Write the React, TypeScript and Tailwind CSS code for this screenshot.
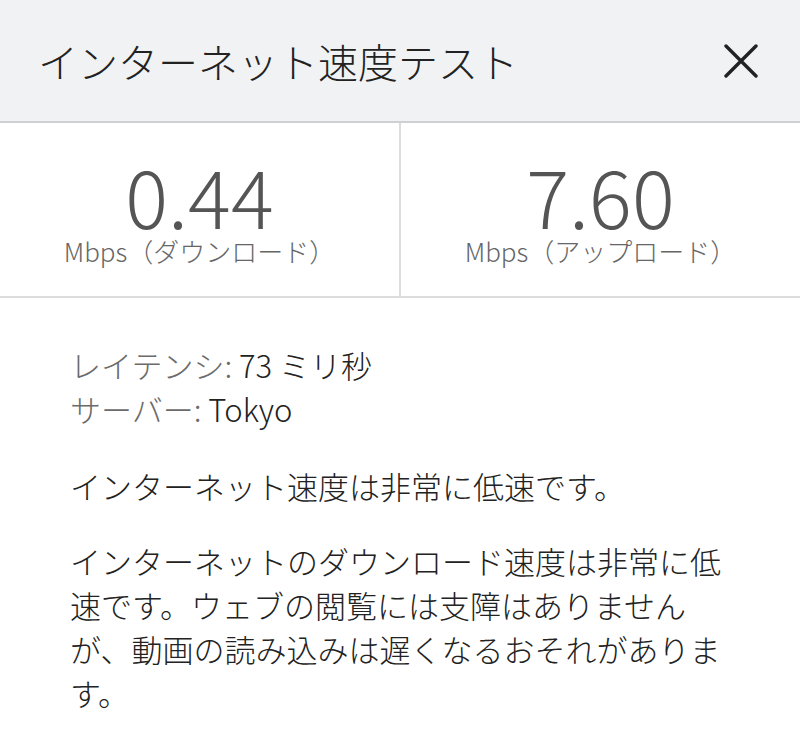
const font = { fontFamily: '"Noto Sans CJK JP", "Noto Sans", sans-serif' };

function CloseIcon() {
  return (
    <svg width="34" height="34" viewBox="0 0 34 34" fill="none" stroke="#222222" strokeWidth="3.4" strokeLinecap="round">
      <path d="M2 2L32 32M32 2L2 32" />
    </svg>
  );
}

function Stat({ value, label }: { value: string; label: string }) {
  return (
    <div className="flex flex-1 flex-col items-center justify-center">
      <div className="text-[80px] font-light leading-[80px] text-[#555555]">{value}</div>
      <div className="mt-[2px] text-[26px] font-light leading-[30px] text-[#666666]">{label}</div>
    </div>
  );
}

export default function App() {
  return (
    <div className="h-[743px] w-[800px] bg-white" style={font}>
      {/* ヘッダー */}
      <div className="flex h-[123px] items-center justify-between border-b-2 border-[#cfd0d2] bg-[#f1f2f4] pl-[38px] pr-[42px]">
        <h1 className="text-[40px] font-light leading-none text-[#222222]">インターネット速度テスト</h1>
        <CloseIcon />
      </div>

      {/* 速度 */}
      <div className="flex h-[175px] border-b-2 border-[#dcdcdc]">
        <Stat value="0.44" label="Mbps（ダウンロード）" />
        <div className="w-[2px] bg-[#dcdcdc]" />
        <Stat value="7.60" label="Mbps（アップロード）" />
      </div>

      {/* 詳細 */}
      <div className="px-[70px] pt-[45px] text-[31px] font-light leading-[44px] text-[#222222]">
        <div>
          <div>
            <span className="text-[#6b6b6b]">レイテンシ: </span>73 ミリ秒
          </div>
          <div>
            <span className="text-[#6b6b6b]">サーバー: </span>Tokyo
          </div>
        </div>
        <p className="mt-[33px]">インターネット速度は非常に低速です。</p>
        <p className="mt-[31px] w-[660px]">
          インターネットのダウンロード速度は非常に低速です。ウェブの閲覧には支障はありませんが、動画の読み込みは遅くなるおそれがあります。
        </p>
      </div>
    </div>
  );
}
